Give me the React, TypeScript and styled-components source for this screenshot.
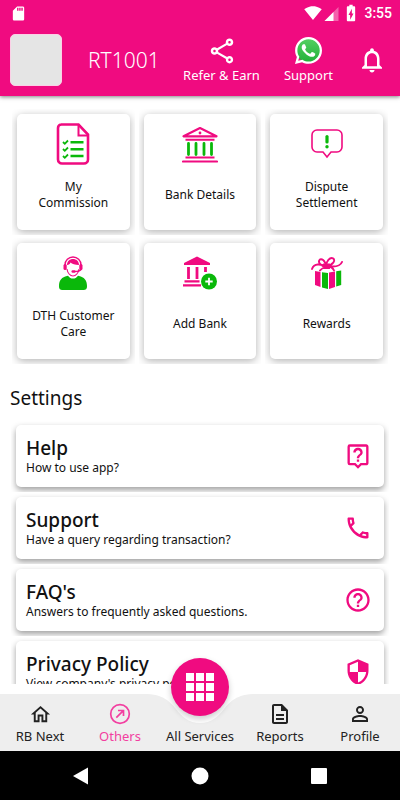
import React from "react";
import styled, { createGlobalStyle } from "styled-components";
import {
  MdBatteryChargingFull,
  MdHelpOutline,
  MdOutlineDescription,
  MdOutlineHome,
  MdOutlineLiveHelp,
  MdOutlinePhone,
  MdOutlineShare,
  MdNotificationsNone,
  MdPersonOutline,
  MdSdCard,
  MdSecurity,
  MdSignalWifi4Bar,
} from "react-icons/md";
import { FaWhatsapp } from "react-icons/fa";

const PINK = "#f00b80";
const GREEN = "#0ab80a";

const GlobalStyle = createGlobalStyle`
  *, *::before, *::after { box-sizing: border-box; }
  body {
    margin: 0;
    background: #fff;
    color: #111;
    font-family: "Noto Sans", "Open Sans", sans-serif;
  }
  button {
    margin: 0;
    padding: 0;
    border: 0;
    background: none;
    color: inherit;
    font: inherit;
    cursor: pointer;
  }
  svg { display: block; flex: none; }
`;

const Screen = styled.div`
  display: flex;
  flex-direction: column;
  height: 100vh;
  overflow: hidden;
`;

const TopArea = styled.header`
  position: relative;
  z-index: 1;
  background: ${PINK};
  color: #fff;
  box-shadow: 0 1px 4px rgba(0, 0, 0, 0.5);
`;

const StatusBar = styled.div`
  display: flex;
  align-items: center;
  height: 24px;
  padding: 2px 8px 0 10px;
`;

const Spacer = styled.div`
  flex: 1;
`;

const StatusIcons = styled.div`
  display: flex;
  align-items: center;
  gap: 2px;
`;

const Clock = styled.span`
  margin-left: 1px;
  font: 500 14px/20px Roboto, sans-serif;
`;

const AppBar = styled.div`
  display: flex;
  align-items: center;
  height: 72px;
  padding: 0 13px 0 10px;
`;

const Avatar = styled.div`
  width: 52px;
  height: 52px;
  border: 1px solid #fbd0e6;
  border-radius: 5px;
  background: #e5e5e5;
`;

const UserName = styled.h1`
  margin: 0 0 0 26px;
  font-size: 21px;
  line-height: 28px;
  font-weight: 300;
`;

const Actions = styled.div`
  display: flex;
  align-items: center;
  gap: 24px;
`;

const HeaderAction = styled.button`
  display: flex;
  flex-direction: column;
  align-items: center;
  gap: 1px;
  font-size: 13px;
  line-height: 18px;
  white-space: nowrap;
`;

const ActionIcon = styled.span`
  display: flex;
  align-items: center;
  justify-content: center;
  height: 28px;
`;

const Content = styled.main`
  flex: 1;
  min-height: 0;
  overflow: hidden;
  padding-top: 13px;
`;

const TileGrid = styled.div`
  display: grid;
  grid-template-columns: repeat(3, 1fr);
  gap: 3px 4px;
  padding: 0 12px;
`;

const TileFrame = styled.div`
  overflow: hidden;
  padding: 5px;
`;

const Tile = styled.button`
  display: flex;
  flex-direction: column;
  align-items: center;
  width: 100%;
  height: 116px;
  padding-top: 8px;
  border-radius: 5px;
  background: #fff;
  box-shadow: 0 2px 8px rgba(0, 0, 0, 0.3);
`;

const TileIcon = styled.span`
  display: flex;
  align-items: center;
  justify-content: center;
  height: 44px;
`;

const TileLabel = styled.span`
  display: flex;
  align-items: center;
  justify-content: center;
  width: 88px;
  height: 48px;
  margin-top: 5px;
  font-size: 12px;
  line-height: 16px;
  text-align: center;
`;

const SectionTitle = styled.h2`
  margin: 20px 0 0;
  padding-left: 10px;
  font-size: 19px;
  line-height: 28px;
  font-weight: 400;
`;

const SettingsList = styled.div`
  display: flex;
  flex-direction: column;
  padding: 9px 11px 0;
`;

const RowFrame = styled.div`
  overflow: hidden;
  margin-bottom: 1px;
  padding: 4px 5px 5px;
`;

const Row = styled.button`
  display: flex;
  align-items: center;
  justify-content: space-between;
  width: 100%;
  height: 62px;
  padding: 0 12px 0 10px;
  border-radius: 5px;
  background: #fff;
  box-shadow: 0 3px 6px rgba(0, 0, 0, 0.38);
  text-align: left;
`;

const RowText = styled.span`
  display: flex;
  flex-direction: column;
`;

const RowTitle = styled.strong`
  font-size: 19px;
  line-height: 24px;
  font-weight: 500;
`;

const RowNote = styled.span`
  font-size: 12px;
  line-height: 16px;
`;

const NavBar = styled.nav`
  position: relative;
  display: grid;
  grid-template-columns: repeat(5, 1fr);
  height: 57px;
  margin-top: 10px;
  background: #eee;
`;

const Notch = styled.svg`
  position: absolute;
  top: 0;
  left: calc(50% - 60px);
`;

const NavItem = styled.button<{ $active?: boolean }>`
  position: relative;
  display: flex;
  flex-direction: column;
  align-items: center;
  gap: 1px;
  padding-top: 8px;
  font-size: 13px;
  line-height: 18px;
  white-space: nowrap;
  color: ${(p) => (p.$active ? "#f23fa0" : "#222")};
`;

const NavIcon = styled.span`
  display: flex;
  align-items: center;
  justify-content: center;
  height: 24px;
`;

const Fab = styled.span`
  position: absolute;
  top: -36px;
  left: calc(50% - 29px);
  display: flex;
  align-items: center;
  justify-content: center;
  width: 58px;
  height: 58px;
  border-radius: 50%;
  background: ${PINK};
  box-shadow: 0 3px 6px rgba(0, 0, 0, 0.2);
`;

const SystemBar = styled.div`
  display: flex;
  align-items: center;
  justify-content: space-around;
  height: 49px;
  padding: 0 22px;
  background: #000;
`;

const SystemKey = styled.button`
  display: flex;
  align-items: center;
  justify-content: center;
  width: 48px;
  height: 48px;
`;

const SignalIcon = () => (
  <svg width="15" height="15" viewBox="0 0 14 15">
    <path d="M0 15L14 1v14z" fill="#fff" opacity="0.35" />
    <path d="M0 15L9 6v9z" fill="#fff" />
  </svg>
);

const WhatsappIcon = () => (
  <svg width="27" height="27" viewBox="0 32 448 448">
    <defs>
      <linearGradient id="wa" x1="0" y1="0" x2="0" y2="1">
        <stop offset="0" stopColor="#57d163" />
        <stop offset="1" stopColor="#20b038" />
      </linearGradient>
    </defs>
    <circle cx="225" cy="254" r="205" fill="url(#wa)" />
    <FaWhatsapp x="-32" y="0" size={512} color="#fff" />
  </svg>
);

const CommissionIcon = () => (
  <svg width="34" height="42" viewBox="0 0 34 42" fill="none">
    <path
      d="M5 1.5h17.500l9.500 10V36.500a4 4 0 0 1-4 4H6a4 4 0 0 1-4-4V5a3.500 3.500 0 0 1 3.500-3.500z"
      stroke={PINK}
      strokeWidth="2.600"
    />
    <path d="M22.500 2v10.500H32" stroke={PINK} strokeWidth="2" />
    <path
      d="M7 19l1.800 1.800L12 17.500M7 26l1.800 1.800L12 24.500M7 33l1.800 1.800L12 31.500"
      stroke={GREEN}
      strokeWidth="1.800"
    />
    <path d="M14.500 19.300h13M14.500 26.300h13M14.500 33h13" stroke={GREEN} strokeWidth="2.500" />
  </svg>
);

const BankIcon = () => (
  <svg width="36" height="37" viewBox="0 0 36 37" fill="none">
    <path d="M1.500 10.300L18 2l16.500 8.300z" stroke={PINK} strokeWidth="2.200" strokeLinejoin="round" />
    <path d="M3.500 13.800h29M3.500 31.500h29" stroke={PINK} strokeWidth="2" />
    <path d="M1 35.500h34" stroke={PINK} strokeWidth="2.200" strokeLinecap="round" />
    <circle cx="18" cy="7" r="1.400" fill={PINK} />
    <path
      d="M6.500 17.500v11M14 17.500v11M22 17.500v11M29.500 17.500v11"
      stroke={GREEN}
      strokeWidth="2.800"
      strokeLinecap="round"
    />
  </svg>
);

const DisputeIcon = () => (
  <svg width="32" height="30" viewBox="0 0 32 30" fill="none">
    <path
      d="M6 1h20a5 5 0 0 1 5 5v12a5 5 0 0 1-5 5h-6l-4 5-4-5H6a5 5 0 0 1-5-5V6a5 5 0 0 1 5-5z"
      stroke={PINK}
      strokeWidth="1.600"
    />
    <path d="M16 7.500v5.500" stroke={GREEN} strokeWidth="3.200" strokeLinecap="round" />
    <circle cx="16" cy="17.700" r="1.700" fill={GREEN} />
  </svg>
);

const CustomerCareIcon = () => (
  <svg width="28" height="34" viewBox="0 0 28 34" fill="none">
    <path
      d="M0 30c0-6 3-9 8-10l1-.3c1.500 2 3 2.800 5 2.800s3.500-.8 5-2.800l1 .3c5 1 8 4 8 10 0 3-1 4-4 4H4c-3 0-4-1-4-4z"
      fill={GREEN}
    />
    <path d="M6 9a8 8 0 0 1 16 0" stroke={PINK} strokeWidth="1.400" />
    <path d="M8 9c0-8 12-8 12 0-4 0-7-1-8.500-2.500C11 8 10 9 8 9z" fill={PINK} />
    <rect x="4.500" y="8" width="3.200" height="6" rx="1.500" fill={PINK} />
    <rect x="20.300" y="8" width="3.200" height="6" rx="1.500" fill={PINK} />
    <path d="M8 13c.5 4 3.200 7 6 7s5.500-3 6-7" stroke={PINK} strokeWidth="1.100" />
    <path d="M22.300 13c-.5 2-3 2.500-7 2.500" stroke={PINK} strokeWidth="1.300" />
    <rect x="12.500" y="14.300" width="4" height="2.400" rx="1.200" fill={PINK} />
  </svg>
);

const AddBankIcon = () => (
  <svg width="34" height="34" viewBox="0 0 34 34" fill="none">
    <path d="M1 7L14 .5 27 7v2H1z" fill={PINK} />
    <path d="M5.500 11v12M14 11v12M22.500 11v5" stroke={PINK} strokeWidth="2.800" />
    <path d="M1.500 25.300h15M0 29.300h18" stroke={PINK} strokeWidth="2.200" />
    <circle cx="26" cy="25.500" r="8" fill={GREEN} />
    <path d="M26 21.800v7.400M22.300 25.500h7.400" stroke="#fff" strokeWidth="1.800" />
  </svg>
);

const RewardsIcon = () => (
  <svg width="32" height="32" viewBox="0 0 32 32" fill="none">
    <path
      d="M15 9.500C9 9 7 5 8.500 3s6 0 6.500 6.500zM15 9.500C15 4 19 0 22 1.300c3 1.700 0 7.200-7 8.200zM15 9.500C10 7 3 6 1 12M16 9c6 1 13 1 15-4M15 9.500c-2 1-5 2.500-6 4M16 9.500c3 0 6 1.500 7 4M13 7.500h5v3.500h-5z"
      stroke={PINK}
      strokeWidth="1.900"
      strokeLinecap="round"
    />
    <path d="M4 14l5.500 1v15l-5.500-2zM18 15.500l6-1V30l-6 2z" fill={PINK} />
    <path d="M11 15.300l6 .7v16l-6-1.500zM25.200 14.300l5-.8V28l-5 1.500z" fill={GREEN} />
  </svg>
);

const OthersIcon = () => (
  <svg width="22" height="22" viewBox="0 0 22 22" fill="none" stroke="currentColor">
    <circle cx="11" cy="11" r="9.300" strokeWidth="1.700" />
    <path d="M7.300 14.700l6.500-6.500M9 7.500h5.500V13" strokeWidth="1.700" />
  </svg>
);

const AppsIcon = () => (
  <svg width="28" height="28" viewBox="0 0 28 28" fill="#fff">
    {[0, 10, 20].map((y) =>
      [0, 10, 20].map((x) => <rect key={`${x}-${y}`} x={x} y={y} width="8" height="8" />),
    )}
  </svg>
);

const tiles = [
  { label: "My Commission", icon: <CommissionIcon /> },
  { label: "Bank Details", icon: <BankIcon /> },
  { label: "Dispute Settlement", icon: <DisputeIcon /> },
  { label: "DTH Customer Care", icon: <CustomerCareIcon /> },
  { label: "Add Bank", icon: <AddBankIcon /> },
  { label: "Rewards", icon: <RewardsIcon /> },
];

const settings = [
  { title: "Help", note: "How to use app?", icon: MdOutlineLiveHelp },
  { title: "Support", note: "Have a query regarding transaction?", icon: MdOutlinePhone },
  { title: "FAQ's", note: "Answers to frequently asked questions.", icon: MdHelpOutline },
  { title: "Privacy Policy", note: "View company's privacy policy.", icon: MdSecurity },
];

export default function App() {
  return (
    <>
      <GlobalStyle />
      <Screen>
        <TopArea>
          <StatusBar>
            <MdSdCard size={17} />
            <Spacer />
            <StatusIcons>
              <MdSignalWifi4Bar size={18} />
              <SignalIcon />
              <MdBatteryChargingFull size={20} />
              <Clock>3:55</Clock>
            </StatusIcons>
          </StatusBar>
          <AppBar>
            <Avatar />
            <UserName>RT1001</UserName>
            <Spacer />
            <Actions>
              <HeaderAction>
                <ActionIcon>
                  <MdOutlineShare size={30} />
                </ActionIcon>
                Refer &amp; Earn
              </HeaderAction>
              <HeaderAction>
                <ActionIcon>
                  <WhatsappIcon />
                </ActionIcon>
                Support
              </HeaderAction>
              <HeaderAction aria-label="Notifications">
                <MdNotificationsNone size={30} />
              </HeaderAction>
            </Actions>
          </AppBar>
        </TopArea>

        <Content>
          <TileGrid>
            {tiles.map((t) => (
              <TileFrame key={t.label}>
                <Tile>
                  <TileIcon>{t.icon}</TileIcon>
                  <TileLabel>{t.label}</TileLabel>
                </Tile>
              </TileFrame>
            ))}
          </TileGrid>
          <SectionTitle>Settings</SectionTitle>
          <SettingsList>
            {settings.map(({ title, note, icon: Icon }) => (
              <RowFrame key={title}>
                <Row>
                  <RowText>
                    <RowTitle>{title}</RowTitle>
                    <RowNote>{note}</RowNote>
                  </RowText>
                  <Icon size={28} color={PINK} />
                </Row>
              </RowFrame>
            ))}
          </SettingsList>
        </Content>

        <NavBar>
          <Notch width="120" height="32" viewBox="0 0 120 32">
            <path d="M4 0C24 0 30 8 36 15c6 8 13 14 24 14s18-6 24-14c6-7 12-15 32-15z" fill="#fff" />
          </Notch>
          <NavItem>
            <NavIcon>
              <MdOutlineHome size={23} />
            </NavIcon>
            RB Next
          </NavItem>
          <NavItem $active>
            <NavIcon>
              <OthersIcon />
            </NavIcon>
            Others
          </NavItem>
          <NavItem>
            <NavIcon />
            All Services
            <Fab>
              <AppsIcon />
            </Fab>
          </NavItem>
          <NavItem>
            <NavIcon>
              <MdOutlineDescription size={24} />
            </NavIcon>
            Reports
          </NavItem>
          <NavItem>
            <NavIcon>
              <MdPersonOutline size={24} />
            </NavIcon>
            Profile
          </NavItem>
        </NavBar>

        <SystemBar>
          <SystemKey aria-label="Back">
            <svg width="16" height="18" viewBox="0 0 16 18">
              <path d="M0 9L15 0.500V17.500z" fill="#fff" />
            </svg>
          </SystemKey>
          <SystemKey aria-label="Home">
            <svg width="18" height="18" viewBox="0 0 18 18">
              <circle cx="9" cy="9" r="8.500" fill="#fff" />
            </svg>
          </SystemKey>
          <SystemKey aria-label="Recent apps">
            <svg width="16" height="16" viewBox="0 0 16 16">
              <rect width="16" height="16" rx="1" fill="#fff" />
            </svg>
          </SystemKey>
        </SystemBar>
      </Screen>
    </>
  );
}
